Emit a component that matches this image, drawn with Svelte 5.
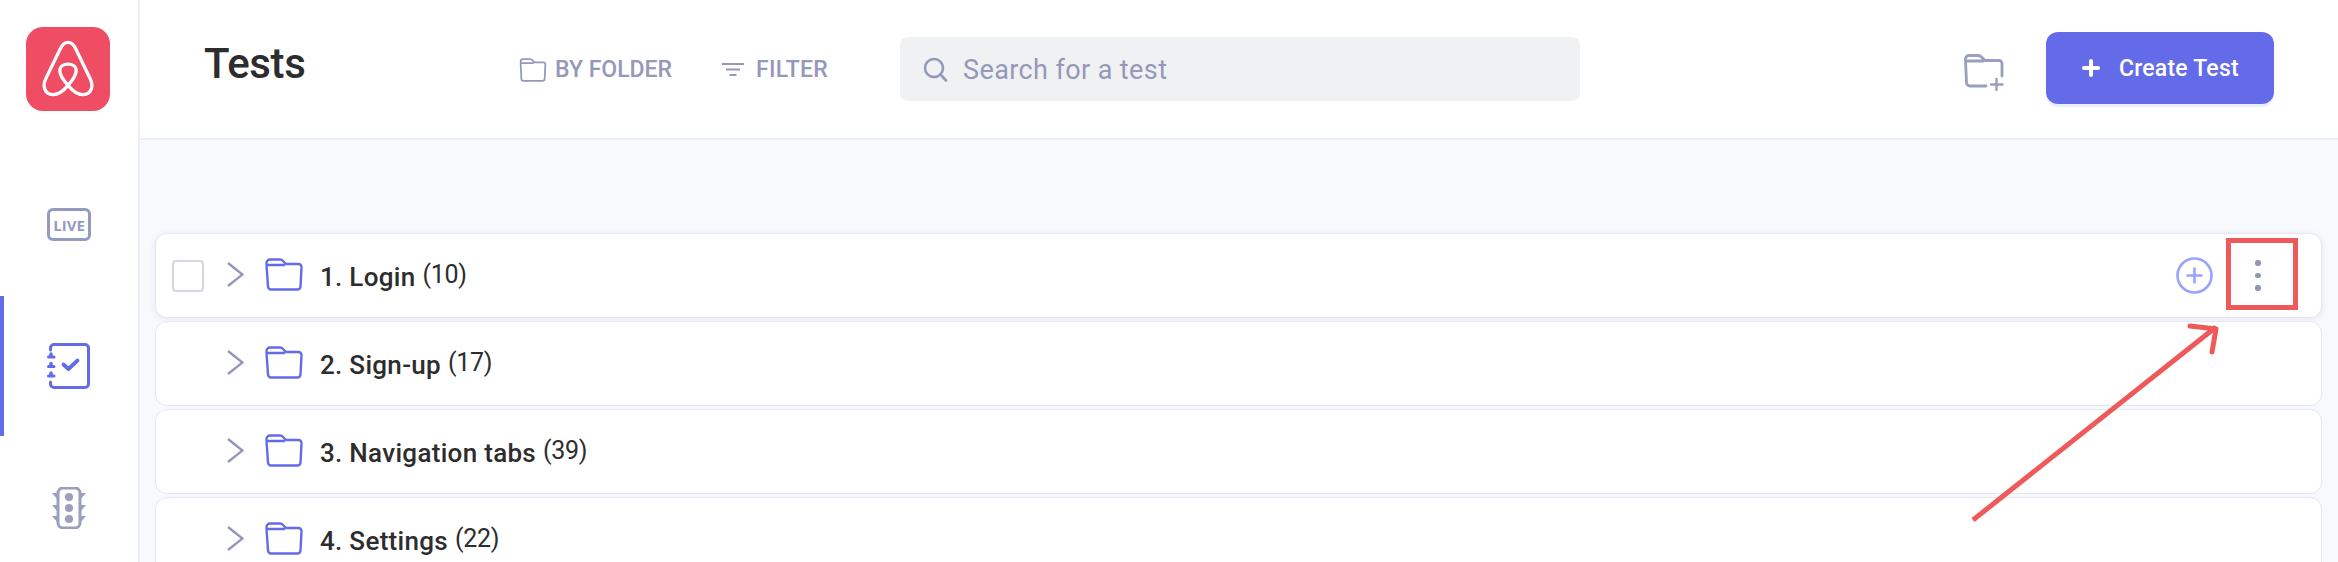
<script>
  const rows = [
    { name: '1. Login', count: 10, first: true },
    { name: '2. Sign-up', count: 17 },
    { name: '3. Navigation tabs', count: 39 },
    { name: '4. Settings', count: 22 }
  ];
</script>

<div class="page">
  <aside class="side">
    <div class="logo">
      <svg width="54" height="58" viewBox="0 0 56 60" fill="none" stroke="#fff" stroke-width="3.400" stroke-linejoin="round">
        <path d="M28 2.500 C24 2.500 22 5 20 9 L5 40 C1 48 4 56 12 56.500 C18 57 23 53 28 47 C33 53 38 57 44 56.500 C52 56 55 48 51 40 L36 9 C34 5 32 2.500 28 2.500 Z"/>
        <path d="M28 47 C22 40 19.500 36 19.500 32 C19.500 27.500 23.500 25 28 25 C32.500 25 36.500 27.500 36.500 32 C36.500 36 34 40 28 47 Z"/>
      </svg>
    </div>
    <div class="nav live-slot"><span class="live">LIVE</span></div>
    <div class="nav active">
      <svg width="44" height="46" viewBox="0 0 44 46" fill="none" stroke="#636be8" stroke-width="3" stroke-linecap="round" stroke-linejoin="round">
        <path d="M3.500 7 V5 a3.500 3.500 0 0 1 3.500-3.500 H38 a3.500 3.500 0 0 1 3.500 3.500 V41 a3.500 3.500 0 0 1-3.500 3.500 H7 a3.500 3.500 0 0 1-3.500-3.500 V39"/>
        <path d="M16.500 21.500 L21.500 26 L30.500 17.500" stroke-width="3.800"/>
        <path d="M1.500 14 H7 M1.500 23.500 H7 M1.500 33 H7"/>
        <path d="M4 11 V13 M4 20.500 V22.500 M4 30 V32" stroke-width="3.500"/>
      </svg>
    </div>
    <div class="nav signal">
      <svg width="34" height="42" viewBox="0 0 34 42" fill="#9a9fbd">
        <rect x="6" y="1" width="22" height="40" rx="5" fill="none" stroke="#9a9fbd" stroke-width="3"/>
        <circle cx="17" cy="10" r="4"/><circle cx="17" cy="21" r="4"/><circle cx="17" cy="32" r="4"/>
        <path d="M0 6 H6 V13 Z M34 6 H28 V13 Z M0 18 H6 V25 Z M34 18 H28 V25 Z M0 29 H6 V36 Z M34 29 H28 V36 Z"/>
      </svg>
    </div>
  </aside>

  <main class="main">
    <header class="head">
      <h1>Tests</h1>
      <div class="tool folder-tool">
        <svg width="28" height="24" viewBox="0 0 38 33" fill="none" stroke="#9499ba" stroke-width="2.400" stroke-linecap="round" stroke-linejoin="round">
          <path d="M2 7 V5 a3.500 3.500 0 0 1 3.500-3.500 H15 a4 4 0 0 1 3 1.500 L21 6 H33 a3 3 0 0 1 3 3 L35 28.500 a3 3 0 0 1-3 3 H6 a3 3 0 0 1-3-3 L2 7 H19"/>
        </svg>
        <span>BY FOLDER</span>
      </div>
      <div class="tool filter-tool">
        <svg width="22" height="13" viewBox="0 0 22 13" fill="none" stroke="#9499ba" stroke-width="2">
          <path d="M0 1 H22 M4 6.500 H18 M7.500 12 H14.500"/>
        </svg>
        <span>FILTER</span>
      </div>
      <div class="search">
        <svg width="25" height="25" viewBox="0 0 25 25" fill="none" stroke="#9499ba" stroke-width="2.600" stroke-linecap="round">
          <circle cx="11" cy="11" r="9"/><path d="M17.500 17.500 L23 23.500"/>
        </svg>
        <span>Search for a test</span>
      </div>
      <svg class="new-folder" width="41" height="37" viewBox="0 0 41 37" fill="none" stroke="#9a9fbd" stroke-width="2.800" stroke-linecap="round" stroke-linejoin="round">
        <path d="M22 32 H6 a3.500 3.500 0 0 1-3.500-3.500 L1.500 7 V5 a3.500 3.500 0 0 1 3.500-3.500 H14 a5 5 0 0 1 3.500 1.500 L21 6.500 H35 a3 3 0 0 1 3 3 V22 M2 7 H19"/>
        <path d="M32.500 25 V36 M27 30.500 H38.500" stroke-width="2.400"/>
      </svg>
      <button class="create">
        <svg width="18" height="18" viewBox="0 0 18 18" stroke="#fff" stroke-width="4" stroke-linecap="round"><path d="M9 2 V16 M2 9 H16"/></svg>
        <span>Create Test</span>
      </button>
    </header>

    <section class="list">
      {#each rows as row}
        <div class="row" class:first={row.first}>
          {#if row.first}<span class="check"></span>{/if}
          <svg class="chev" width="17" height="25" viewBox="0 0 17 25" fill="none" stroke="#9398ba" stroke-width="2.400"><path d="M1 1 L15.500 12.500 L1 24"/></svg>
          <svg class="folder" width="38" height="33" viewBox="0 0 38 33" fill="none" stroke="#636be8" stroke-width="2.400" stroke-linecap="round" stroke-linejoin="round">
            <path d="M1.500 7 V5 a3.500 3.500 0 0 1 3.500-3.500 H15 a4 4 0 0 1 3 1.500 L21 6 H33.500 a3 3 0 0 1 3 3 L35.500 28.500 a3 3 0 0 1-3 3 H6 a3 3 0 0 1-3-3 L1.500 7 H19"/>
          </svg>
          <span class="name">{row.name}</span>
          <span class="count">({row.count})</span>
          {#if row.first}
            <svg class="add" width="37" height="37" viewBox="0 0 37 37" fill="none" stroke="#98a3ff" stroke-width="2.600"><circle cx="18.500" cy="18.500" r="17"/><path d="M18.500 10.500 V26.500 M10.500 18.500 H26.500"/></svg>
            <span class="dots"><i></i><i></i><i></i></span>
          {/if}
        </div>
      {/each}
    </section>
  </main>

  <div class="mark"></div>
  <svg class="arrow" width="270" height="220" viewBox="0 0 270 220" fill="none" stroke="#ee5a5a" stroke-width="5" stroke-linecap="round" stroke-linejoin="round">
    <path d="M3 200 L246 7" stroke-linecap="butt"/>
    <path d="M220 6 L246 9 L242 32"/>
  </svg>
</div>

<style>
  :global(body) { margin: 0; background: #fff; overflow: hidden; }
  .page {
    position: relative;
    display: flex;
    width: 2338px;
    height: 562px;
    overflow: hidden;
    font-family: Roboto, "Liberation Sans", sans-serif;
  }
  .side {
    flex: none;
    width: 138px;
    border-right: 2px solid #eceef5;
    display: flex;
    flex-direction: column;
    align-items: center;
    background: #fff;
  }
  .logo {
    width: 84px;
    height: 84px;
    margin-top: 27px;
    margin-right: 2px;
    border-radius: 17px;
    background: #ee4d64;
    display: flex;
    align-items: center;
    justify-content: center;
    flex: none;
  }
  .nav {
    position: relative;
    flex: none;
    width: 100%;
    height: 140px;
    display: flex;
    align-items: center;
    justify-content: center;
  }
  .live-slot { margin-top: 45px; padding-bottom: 3px; box-sizing: border-box; }
  .signal { margin-top: 2px; }
  .live {
    box-sizing: border-box;
    width: 44px;
    height: 33px;
    border: 3px solid #949bc0;
    border-radius: 6px;
    color: #949bc0;
    font: 700 15px "Open Sans", sans-serif;
    display: flex;
    align-items: center;
    justify-content: center;
  }
  .active::before {
    content: "";
    position: absolute;
    left: 0;
    top: 0;
    bottom: 0;
    width: 4px;
    background: #636be8;
  }
  .main { flex: 1; display: flex; flex-direction: column; min-width: 0; background: #f8f9fd; }
  .head {
    box-sizing: border-box;
    flex: none;
    height: 140px;
    background: #fff;
    border-bottom: 2px solid #eceef5;
    display: flex;
    align-items: center;
  }
  h1 {
    margin: 0 0 12px 64px;
    width: 315px;
    flex: none;
    font-size: 42px;
    font-weight: 500;
    letter-spacing: -0.4px;
    color: #2d2d2d;
  }
  .tool {
    flex: none;
    display: flex;
    align-items: center;
    color: #9499ba;
    font-size: 23px;
    font-weight: 500;
    margin-top: 1px;
  }
  .folder-tool { gap: 8px; width: 203px; }
  .filter-tool { gap: 12px; width: 178px; }
  .filter-tool span { letter-spacing: 0.3px; }
  .search {
    box-sizing: border-box;
    flex: none;
    width: 680px;
    height: 64px;
    align-self: flex-start;
    margin-top: 37px;
    padding-left: 23px;
    border-radius: 8px;
    background: #f0f1f3;
    display: flex;
    align-items: center;
    gap: 15px;
    color: #9499ba;
    font-size: 27px;
    letter-spacing: 0.4px;
  }
  .search span { margin-top: 2px; }
  .new-folder { flex: none; margin-left: 384px; margin-top: 6px; }
  .create {
    flex: none;
    box-sizing: border-box;
    width: 228px;
    height: 72px;
    margin-left: 41px;
    align-self: flex-start;
    margin-top: 32px;
    border: 0;
    border-radius: 12px;
    background: #636be8;
    box-shadow: 0 3px 0 #eceef5;
    color: #fff;
    font-family: inherit;
    font-size: 23px;
    font-weight: 500;
    letter-spacing: 0.2px;
    display: flex;
    align-items: center;
    padding-left: 36px;
    gap: 19px;
  }
  .list {
    padding: 93px 16px 0 15px;
    display: flex;
    flex-direction: column;
    gap: 3px;
  }
  .row {
    box-sizing: border-box;
    flex: none;
    height: 85px;
    padding-left: 71px;
    border: 1.5px solid #e6e8f1;
    border-radius: 12px;
    background: #fff;
    display: flex;
    align-items: center;
    color: #2d2d2d;
  }
  .row.first { padding-left: 16px; box-shadow: 0 1px 6px rgba(60, 70, 130, 0.1); }
  .check {
    box-sizing: border-box;
    flex: none;
    width: 32px;
    height: 32px;
    margin-right: 23px;
    border: 2.5px solid #d3d7e4;
    border-radius: 4px;
  }
  .chev { flex: none; margin-right: 21px; margin-top: -2px; }
  .folder { flex: none; margin-right: 17px; margin-top: -2px; }
  .name { font-size: 26px; font-weight: 500; margin-top: 3px; letter-spacing: 0.3px; }
  .count { font-size: 25px; margin-left: 7px; margin-top: -2px; letter-spacing: -0.3px; }
  .add { flex: none; margin-left: auto; margin-right: 42px; }
  .dots {
    flex: none;
    width: 5px;
    margin-right: 61px;
    display: flex;
    flex-direction: column;
    gap: 7px;
  }
  .dots i { width: 5.500px; height: 5.500px; border-radius: 50%; background: #9196b5; }
  .mark {
    position: absolute;
    left: 2226px;
    top: 238px;
    box-sizing: border-box;
    width: 72px;
    height: 72px;
    border: 5px solid #ee5a5a;
  }
  .arrow { position: absolute; left: 1970px; top: 320px; }
</style>
